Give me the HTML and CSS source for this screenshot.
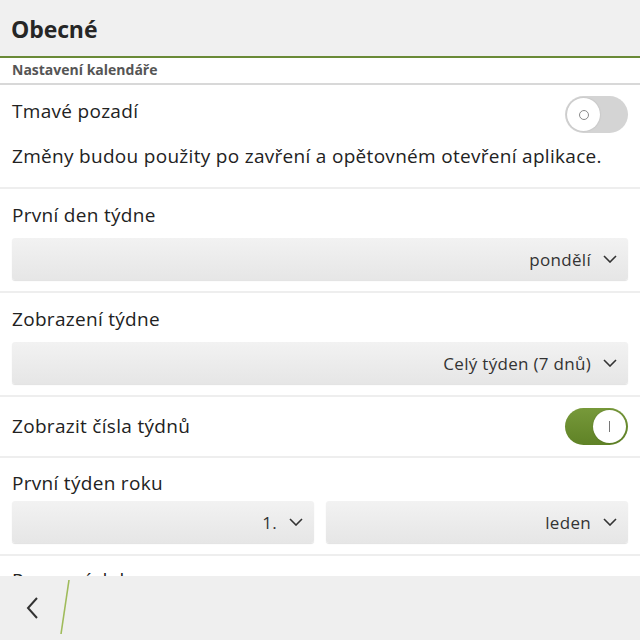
FILE: index.html
```html
<!DOCTYPE html>
<html lang="cs">
<head>
<meta charset="utf-8">
<title>Obecné</title>
<link rel="stylesheet" href="styles.css">
</head>
<body>
<div class="screen">
  <header class="header"><h1 class="title">Obecné</h1></header>
  <div class="section-head">Nastavení kalendáře</div>
  <div class="content">
    <div class="group group-dark">
      <div class="row-toggle">
        <span class="label">Tmavé pozadí</span>
        <span class="toggle toggle-off"><span class="knob"><span class="ring"></span></span></span>
      </div>
      <p class="note">Změny budou použity po zavření a opětovném otevření aplikace.</p>
    </div>
    <div class="group group-select">
      <div class="label">První den týdne</div>
      <div class="dropdown"><span>pondělí</span><svg class="chev" viewBox="0 0 14 8" width="14" height="8"><path d="M1 1 L7 7 L13 1" fill="none" stroke="#333" stroke-width="1.6"/></svg></div>
    </div>
    <div class="group group-select">
      <div class="label">Zobrazení týdne</div>
      <div class="dropdown"><span>Celý týden (7 dnů)</span><svg class="chev" viewBox="0 0 14 8" width="14" height="8"><path d="M1 1 L7 7 L13 1" fill="none" stroke="#333" stroke-width="1.6"/></svg></div>
    </div>
    <div class="group group-switch">
      <span class="label">Zobrazit čísla týdnů</span>
      <span class="toggle toggle-on"><span class="knob"><span class="bar"></span></span></span>
    </div>
    <div class="group group-year">
      <div class="label">První týden roku</div>
      <div class="pair">
        <div class="dropdown"><span>1.</span><svg class="chev" viewBox="0 0 14 8" width="14" height="8"><path d="M1 1 L7 7 L13 1" fill="none" stroke="#333" stroke-width="1.6"/></svg></div>
        <div class="dropdown"><span>leden</span><svg class="chev" viewBox="0 0 14 8" width="14" height="8"><path d="M1 1 L7 7 L13 1" fill="none" stroke="#333" stroke-width="1.6"/></svg></div>
      </div>
    </div>
    <div class="group group-cut">
      <div class="label">Pracovní doba</div>
    </div>
  </div>
  <footer class="actionbar">
    <svg class="back" viewBox="0 0 14 24" width="14" height="24"><path d="M11 2 L2 12 L11 22" fill="none" stroke="#333" stroke-width="2"/></svg>
    <svg class="slash" viewBox="0 0 12 56" width="12" height="56"><path d="M10 1 L2 55" fill="none" stroke="#9fbb5a" stroke-width="1.6"/></svg>
  </footer>
</div>
</body>
</html>
```
FILE: styles.css
```css
* { box-sizing: border-box; }
html, body { margin: 0; padding: 0; }
body {
  width: 640px;
  height: 640px;
  overflow: hidden;
  background: #fff;
  font-family: "Open Sans", "Lato", sans-serif;
  color: #222;
}
.screen {
  width: 640px;
  height: 640px;
  display: flex;
  flex-direction: column;
  overflow: hidden;
}
.header {
  height: 58px;
  flex: none;
  background: #f0f0f0;
  border-bottom: 2px solid #6a8a37;
  display: flex;
  align-items: center;
  padding: 0 11px;
}
.title {
  margin: 0;
  font-size: 23px;
  font-weight: 700;
  color: #262626;
  padding-top: 2px;
  letter-spacing: -0.1px;
}
.section-head {
  flex: none;
  height: 27px;
  padding: 2px 12px 0;
  font-size: 14px;
  font-weight: 700;
  color: #555;
  border-bottom: 2px solid #d8d8d8;
}
.content {
  flex: 1;
  overflow: hidden;
}
.label {
  font-size: 19px;
  line-height: 24px;
  letter-spacing: 0.3px;
}
.group {
  border-bottom: 2px solid #eeeeee;
}
.group-dark {
  padding: 11px 12px 0;
  height: 104px;
}
.row-toggle {
  display: flex;
  justify-content: space-between;
  align-items: center;
}
.row-toggle .label { margin-top: -8px; }
.note {
  margin: 11px 0 0;
  font-size: 19px;
  line-height: 24px;
  letter-spacing: 0.3px;
}
.toggle {
  width: 63px;
  height: 37px;
  border-radius: 19px;
  display: flex;
  align-items: center;
  padding: 0 2px;
  flex: none;
}
.toggle-off {
  background: #d4d4d4;
  justify-content: flex-start;
}
.toggle-on {
  background: linear-gradient(#77993a, #5f8226);
  justify-content: flex-end;
}
.knob {
  width: 33px;
  height: 33px;
  border-radius: 50%;
  background: #fff;
  display: flex;
  align-items: center;
  justify-content: center;
  box-shadow: 0 0 2px rgba(0,0,0,0.15);
}
.ring {
  width: 10px;
  height: 10px;
  border-radius: 50%;
  border: 1.5px solid #8a8a8a;
}
.bar {
  width: 1.5px;
  height: 11px;
  background: #777;
}
.group-select {
  padding: 14px 12px 10px;
  height: 104px;
}
.dropdown {
  margin-top: 11px;
  height: 42px;
  border-radius: 3px;
  background: linear-gradient(#f2f2f2, #e6e6e6);
  box-shadow: 0 1px 1px rgba(0,0,0,0.12);
  display: flex;
  align-items: center;
  justify-content: flex-end;
  padding-right: 11px;
  font-size: 17px;
  letter-spacing: 0.3px;
  color: #333;
}
.dropdown span { margin-right: 12px; }
.chev { display: block; }
.group-switch {
  height: 61px;
  padding: 0 12px;
  display: flex;
  align-items: center;
  justify-content: space-between;
}
.group-switch .label { margin-top: -2px; }
.group-year {
  padding: 13px 12px 11px;
  height: 98px;
}
.pair {
  display: grid;
  grid-template-columns: 1fr 1fr;
  gap: 12px;
}
.pair .dropdown { margin-top: 6px; }
.group-cut {
  border-bottom: none;
  padding: 12px 12px 0;
}
.actionbar {
  flex: none;
  height: 64px;
  background: #efefef;
  display: flex;
  align-items: center;
  padding-left: 26px;
  gap: 19px;
}
.back { display: block; margin-top: -1px; }
.slash { display: block; margin-top: -2px; }
```
